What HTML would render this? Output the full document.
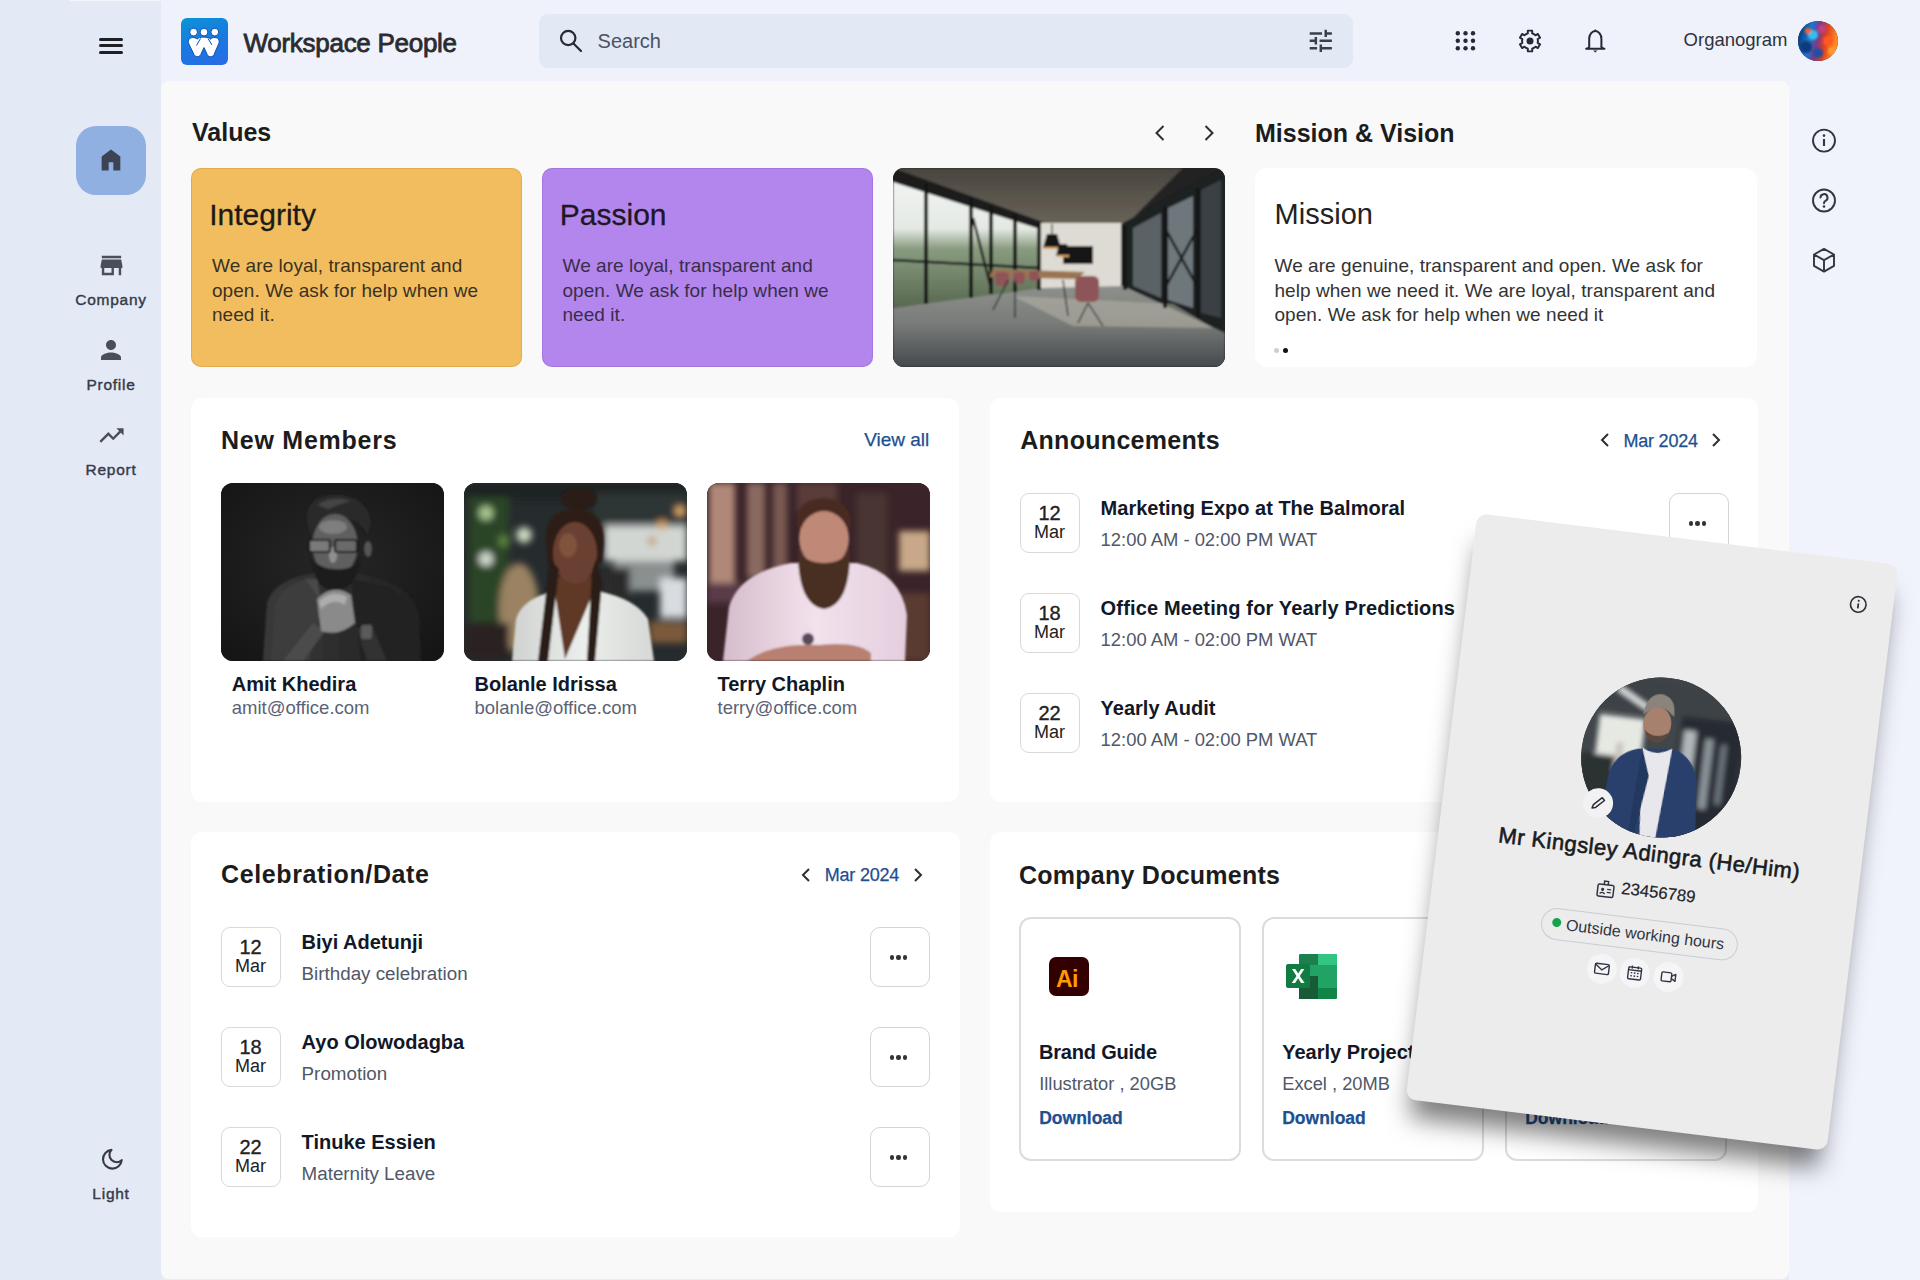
<!DOCTYPE html>
<html><head><meta charset="utf-8">
<style>
*{box-sizing:border-box;margin:0;padding:0}
html,body{width:1920px;height:1280px;overflow:hidden}
body{background:#eff2fb;font-family:"Liberation Sans",sans-serif;position:relative;color:#1a1a1a}
.a{position:absolute}
.t{position:absolute;line-height:1;white-space:nowrap;top:calc(var(--b)*1px - 0.8465em)}
.b{font-weight:700}
svg{position:absolute;overflow:visible}
#side{left:0;top:0;width:161px;height:1280px;background:#e4e9f6}
#top{left:161px;top:0;width:1759px;height:81px;background:#eff2fb}
#main{left:161px;top:81px;width:1628px;height:1198px;background:#f9f9f9;border-radius:8px}
#rcol{left:1789px;top:81px;width:131px;height:1199px;background:#f0f3fc}
.card{position:absolute;background:#fff;border-radius:11px}
.lbl{font-size:15.5px;font-weight:400;color:#363a46;letter-spacing:0.75px;-webkit-text-stroke:0.4px #363a46}
.h2{font-size:25px;font-weight:700;color:#1c1c1c}
.date{position:absolute;width:60px;height:60px;border:1.5px solid #d9d9d9;border-radius:9px;background:#fff}
.date .n{position:absolute;left:0;width:57px;text-align:center;font-size:20px;line-height:1;top:calc(27px - 0.8465em - 1.5px);color:#222;-webkit-text-stroke:0.35px #222}
.date .m{position:absolute;left:0;width:57px;text-align:center;font-size:18px;line-height:1;top:calc(45.5px - 0.8465em - 1.5px);color:#222}
.dots{position:absolute;width:60px;height:60px;border:1.5px solid #d4d4d4;border-radius:10px;background:#fff}
.dots i{position:absolute;top:27.3px;width:4.5px;height:4.5px;border-radius:50%;background:#333}
.blue{color:#1d4f91;-webkit-text-stroke:0.25px #1d4f91}
.gray{color:#4f5868}
.nm{font-size:20px;font-weight:700;color:#111827}
</style></head><body>

<div id="side" class="a"></div>
<div class="a" style="left:70px;top:0;width:91px;height:1px;background:#f4f6fc"></div>
<div id="top" class="a"></div>
<div id="rcol" class="a"></div>
<div class="a" style="left:161px;top:1270px;width:1628px;height:10px;background:#e8ecf8"></div>
<div id="main" class="a"></div>

<!-- SIDEBAR -->
<div class="a" style="left:99px;top:38px;width:24px;height:3px;border-radius:2px;background:#1f2024"></div>
<div class="a" style="left:99px;top:44.3px;width:24px;height:3px;border-radius:2px;background:#1f2024"></div>
<div class="a" style="left:99px;top:50.5px;width:24px;height:3px;border-radius:2px;background:#1f2024"></div>

<div class="a" style="left:76px;top:126px;width:70px;height:69px;border-radius:20px;background:#8fb0e0"></div>
<svg style="left:97px;top:146px" width="28" height="28" viewBox="0 0 24 24"><path d="M4 21V9l8-6 8 6v12h-6v-7h-4v7z" fill="#3d4354"/></svg>

<svg style="left:96.5px;top:251px" width="29" height="29" viewBox="0 0 24 24"><path d="M20 4H4v2h16V4zm1 10v-2l-1-5H4l-1 5v2h1v6h10v-6h4v6h2v-6h1zm-9 4H6v-4h6v4z" fill="#4a4d5a"/></svg>
<div class="t lbl" style="--b:305.4;left:111px;transform:translateX(-50%)">Company</div>

<svg style="left:96px;top:335px" width="30" height="30" viewBox="0 0 24 24"><path d="M12 12c2.21 0 4-1.79 4-4s-1.79-4-4-4-4 1.79-4 4 1.79 4 4 4zm0 2c-2.67 0-8 1.34-8 4v2h16v-2c0-2.66-5.33-4-8-4z" fill="#4a4d5a"/></svg>
<div class="t lbl" style="--b:390;left:111px;transform:translateX(-50%)">Profile</div>

<svg style="left:96.5px;top:420.5px" width="29" height="29" viewBox="0 0 24 24"><path d="M16 6l2.29 2.29-4.88 4.88-4-4L2 16.59 3.41 18l6-6 4 4 6.3-6.29L22 12V6z" fill="#4a4d5a"/></svg>
<div class="t lbl" style="--b:475;left:111px;transform:translateX(-50%)">Report</div>

<svg style="left:97.5px;top:1145.5px" width="26.5" height="26.5" viewBox="0 0 24 24"><path d="M12.3 3.5a8.5 8.5 0 1 0 9.2 9.3 6.5 6.5 0 0 1-9.2-9.3z" fill="none" stroke="#3a3a40" stroke-width="1.9" stroke-linejoin="round"/></svg>
<div class="t lbl" style="--b:1199;left:111px;transform:translateX(-50%)">Light</div>

<!-- TOPBAR -->
<div class="a" style="left:181px;top:18px;width:47px;height:47px;border-radius:6px;background:linear-gradient(160deg,#0b93d6 0%,#1a78e0 55%,#2a6ae8 100%)"></div>
<svg style="left:181px;top:18px" width="47" height="47" viewBox="0 0 47 47">
 <g fill="#fff" stroke="#0a4fb0" stroke-width="1">
  <circle cx="12.6" cy="14.1" r="3.9"/><circle cx="23" cy="14.1" r="3.9"/><circle cx="33.8" cy="14.1" r="3.9"/>
  <path d="M7.5 22c1-3 7-3.2 8.5-0.8 1.5-2.8 12-2.8 13.5 0 1.6-2.4 7.5-2.2 8.5 0.8 0.5 1.6 0 3-0.8 5l-4.2 9.6c-1.3 2.8-5.5 2.8-6.8 0L23 29.6l-3.2 6.9c-1.3 2.8-5.5 2.8-6.8 0L8.3 27c-0.8-2-1.3-3.4-0.8-5z"/>
 </g>
 <path d="M19.5 20.5l-4 7M27 20.5l4 6.5" stroke="#0a4fb0" stroke-width="1" fill="none"/>
</svg>
<div class="t" style="--b:52;left:243.5px;font-size:26px;letter-spacing:-0.28px;color:#2b2b30;-webkit-text-stroke:0.8px #2b2b30">Workspace People</div>

<div class="a" style="left:539px;top:13.5px;width:814px;height:54px;border-radius:9px;background:#e3e8f5"></div>
<svg style="left:558px;top:28px" width="26" height="26" viewBox="0 0 26 26"><circle cx="10.2" cy="10" r="7.2" fill="none" stroke="#262a35" stroke-width="2.2"/><path d="M15.5 15.5l7.5 7.5" stroke="#262a35" stroke-width="2.2" stroke-linecap="round"/></svg>
<div class="t" style="--b:48;left:597.6px;font-size:20px;color:#4b5262">Search</div>
<svg style="left:1305.6px;top:26.3px" width="29.6" height="29.6" viewBox="0 0 24 24"><path d="M3 17v2h6v-2H3zM3 5v2h10V5H3zm10 16v-2h8v-2h-8v-2h-2v6h2zM7 9v2H3v2h4v2h2V9H7zm14 4v-2H11v2h10zm-6-4h2V7h4V5h-4V3h-2v6z" fill="#3a3f4c"/></svg>

<svg style="left:1450px;top:26px" width="30" height="30" viewBox="0 0 30 30" fill="#262a35">
 <circle cx="7.8" cy="7.3" r="2.2"/><circle cx="15.5" cy="7.3" r="2.2"/><circle cx="23" cy="7.3" r="2.2"/>
 <circle cx="7.8" cy="14.8" r="2.2"/><circle cx="15.5" cy="14.8" r="2.2"/><circle cx="23" cy="14.8" r="2.2"/>
 <circle cx="7.8" cy="22.3" r="2.2"/><circle cx="15.5" cy="22.3" r="2.2"/><circle cx="23" cy="22.3" r="2.2"/>
</svg>
<svg style="left:1515.3px;top:25.8px" width="30" height="30" viewBox="0 0 30 30"><path d="M11.29 8.02 L12.82 7.41 L12.80 4.63 L17.20 4.63 L17.18 7.41 L18.71 8.02 L19.19 8.30 L20.49 9.32 L22.88 7.91 L25.08 11.72 L22.67 13.09 L22.90 14.72 L22.90 15.28 L22.67 16.91 L25.08 18.28 L22.88 22.09 L20.49 20.68 L19.19 21.70 L18.71 21.98 L17.18 22.59 L17.20 25.37 L12.80 25.37 L12.82 22.59 L11.29 21.98 L10.81 21.70 L9.51 20.68 L7.12 22.09 L4.92 18.28 L7.33 16.91 L7.10 15.28 L7.10 14.72 L7.33 13.09 L4.92 11.72 L7.12 7.91 L9.51 9.32 L10.81 8.30Z" fill="none" stroke="#262a35" stroke-width="1.95" stroke-linejoin="round"/><circle cx="15" cy="15" r="3.5" fill="#262a35"/></svg>
<svg style="left:1583px;top:28px" width="24" height="26" viewBox="0 0 24 26"><path d="M6.2 19.6V10.8a6.1 7.8 0 0 1 12.2 0V19.6" fill="none" stroke="#262a35" stroke-width="2"/><path d="M3.2 20.7h18.2" stroke="#262a35" stroke-width="2.1" stroke-linecap="round"/><path d="M6.2 18.5q0 1.6-2.6 2.2M18.4 18.5q0 1.6 2.6 2.2" fill="none" stroke="#262a35" stroke-width="1.8"/><path d="M12.3 0.9l1.6 2.3h-3.2z" fill="#262a35"/><path d="M10.1 22.6h4.4l-2.2 1.8z" fill="#262a35"/></svg>

<div class="t" style="--b:47;left:1683.6px;font-size:18.5px;color:#2e3240">Organogram</div>
<div class="a" style="left:1798.4px;top:20.8px;width:40px;height:40px;border-radius:50%;overflow:hidden;background:#1a3a7a">
<svg style="left:0;top:0" width="40" height="40" viewBox="0 0 40 40"><defs><filter id="avb"><feGaussianBlur stdDeviation="1.2"/></filter>
<linearGradient id="avg" x1="0" y1="0" x2="1" y2="0.2"><stop offset="0" stop-color="#0a2a5a"/><stop offset="0.35" stop-color="#1a78d0"/><stop offset="0.55" stop-color="#7a3a8a"/><stop offset="0.75" stop-color="#e04020"/><stop offset="1" stop-color="#ff8a20"/></linearGradient></defs>
<rect width="40" height="40" fill="url(#avg)"/>
<g filter="url(#avb)"><circle cx="15" cy="14" r="5" fill="#30c0f0"/><circle cx="8" cy="26" r="6" fill="#0a3a80"/><circle cx="30" cy="20" r="5" fill="#ff5a20"/><circle cx="24" cy="8" r="4" fill="#c04080"/><circle cx="20" cy="32" r="5" fill="#2050a0"/><circle cx="34" cy="30" r="4" fill="#ff9a30"/><circle cx="10" cy="10" r="3" fill="#ff6020"/></g>
</svg></div>

<!-- RIGHT COL ICONS -->
<svg style="left:1811px;top:128px" width="26" height="26" viewBox="0 0 26 26"><circle cx="13" cy="12.6" r="11" fill="none" stroke="#33363f" stroke-width="1.9"/><path d="M13 11v7" stroke="#33363f" stroke-width="2.1"/><circle cx="13" cy="7.6" r="1.3" fill="#33363f"/></svg>
<svg style="left:1811px;top:188px" width="26" height="26" viewBox="0 0 26 26"><circle cx="13" cy="12.5" r="11" fill="none" stroke="#33363f" stroke-width="1.9"/><path d="M9.5 9.6a3.5 3.5 0 1 1 5 3.2c-1 .5-1.5 1.2-1.5 2.4" fill="none" stroke="#33363f" stroke-width="2" stroke-linecap="round"/><circle cx="13" cy="18.5" r="1.3" fill="#33363f"/></svg>
<svg style="left:1811px;top:247px" width="26" height="26" viewBox="0 0 26 26"><path d="M13 1.8l10 5.7v11.4l-10 5.7-10-5.7V7.5z M3 7.5l10 5.7 10-5.7 M13 13.2v11.4" fill="none" stroke="#33363f" stroke-width="1.9" stroke-linejoin="round"/></svg>


<!-- VALUES -->
<div class="t h2" style="--b:141.6;left:192px">Values</div>
<svg style="left:1150px;top:123px" width="20" height="20" viewBox="0 0 20 20"><path d="M13.5 3l-7 7 7 7" fill="none" stroke="#2f2f33" stroke-width="2"/></svg>
<svg style="left:1199px;top:123px" width="20" height="20" viewBox="0 0 20 20"><path d="M6.5 3l7 7-7 7" fill="none" stroke="#2f2f33" stroke-width="2"/></svg>
<div class="t h2" style="--b:142;left:1255px">Mission &amp; Vision</div>

<div class="a" style="left:191px;top:168px;width:331px;height:199px;border-radius:10px;background:#f2bd5f;box-shadow:inset 0 0 0 1px rgba(200,140,40,.35)"></div>
<div class="t" style="--b:225.5;left:209.2px;font-size:30px;color:#1d1b16;-webkit-text-stroke:0.3px #1d1b16">Integrity</div>
<div class="t" style="--b:272;left:212px;font-size:19px;color:#3b3222;letter-spacing:0.05px">We are loyal, transparent and</div>
<div class="t" style="--b:296.6;left:212px;font-size:19px;color:#3b3222;letter-spacing:0.05px">open. We ask for help when we</div>
<div class="t" style="--b:321.2;left:212px;font-size:19px;color:#3b3222;letter-spacing:0.05px">need it.</div>

<div class="a" style="left:542px;top:168px;width:331px;height:199px;border-radius:10px;background:#b286ed;box-shadow:inset 0 0 0 1px rgba(140,90,210,.35)"></div>
<div class="t" style="--b:225.5;left:559.8px;font-size:30px;color:#1d1824;-webkit-text-stroke:0.3px #1d1824">Passion</div>
<div class="t" style="--b:272;left:562.5px;font-size:19px;color:#3a2d4a;letter-spacing:0.05px">We are loyal, transparent and</div>
<div class="t" style="--b:296.6;left:562.5px;font-size:19px;color:#3a2d4a;letter-spacing:0.05px">open. We ask for help when we</div>
<div class="t" style="--b:321.2;left:562.5px;font-size:19px;color:#3a2d4a;letter-spacing:0.05px">need it.</div>

<!-- office image -->
<div class="a" style="left:893px;top:168px;width:332px;height:199px;border-radius:11px;overflow:hidden;background:#6b6e70">
<svg style="left:0;top:0" width="332" height="199" viewBox="0 0 332 199">
 <defs>
  <linearGradient id="floor" x1="0" y1="0" x2="0" y2="1"><stop offset="0" stop-color="#8e908c"/><stop offset="0.45" stop-color="#7a7c7a"/><stop offset="1" stop-color="#454a4e"/></linearGradient>
  <linearGradient id="ceil" x1="0" y1="0" x2="0" y2="1"><stop offset="0" stop-color="#4a453f"/><stop offset="1" stop-color="#6a645a"/></linearGradient>
  <linearGradient id="win" x1="0" y1="0" x2="0" y2="1"><stop offset="0" stop-color="#f2f5f3"/><stop offset="0.4" stop-color="#e4e9e4"/><stop offset="0.55" stop-color="#8a9c80"/><stop offset="1" stop-color="#56684e"/></linearGradient>
  <filter id="obl" x="-10%" y="-10%" width="120%" height="120%"><feGaussianBlur stdDeviation="0.8"/></filter>
 </defs>
 <rect width="332" height="199" fill="#222"/>
 <g filter="url(#obl)">
 <polygon points="0,8 150,55 150,122 0,140" fill="url(#win)"/>
 <polygon points="0,0 290,0 232,58 150,56 0,6" fill="url(#ceil)"/>
 <polygon points="0,0 150,54 150,62 0,14" fill="#1b1b1b"/>
 <rect x="148" y="55" width="82" height="65" fill="#dedad4"/>
 <rect x="170" y="78" width="30" height="18" fill="#141414"/>
 <polygon points="228,56 332,0 332,165 228,120" fill="#1e2024"/>
 <polygon points="240,60 268,45 268,130 240,118" fill="#5a6266"/>
 <polygon points="275,40 300,28 300,140 275,132" fill="#6e777b"/>
 <polygon points="308,22 328,12 328,150 308,145" fill="#3a4044"/>
 <polygon points="0,140 150,120 230,118 332,165 332,199 0,199" fill="url(#floor)"/>
 <polygon points="120,128 280,136 320,160 180,158" fill="#b8b4a8" opacity="0.55"/>
 <g stroke="#151515" stroke-width="4">
  <line x1="33" y1="16" x2="33" y2="136"/><line x1="78" y1="30" x2="78" y2="130"/>
  <line x1="98" y1="38" x2="98" y2="126"/><line x1="122" y1="46" x2="122" y2="124"/><line x1="146" y1="55" x2="146" y2="122"/>
  <line x1="232" y1="58" x2="232" y2="122"/><line x1="272" y1="38" x2="272" y2="140"/><line x1="305" y1="20" x2="305" y2="150"/>
 </g>
 <g stroke="#151515" stroke-width="2.5"><line x1="0" y1="92" x2="146" y2="100"/><line x1="80" y1="50" x2="98" y2="120"/><line x1="272" y1="60" x2="305" y2="120"/><line x1="305" y1="60" x2="272" y2="120"/></g>
 <line x1="159" y1="56" x2="159" y2="66" stroke="#222" stroke-width="1"/><path d="M150 80 L154 66 L164 66 L168 80 Z" fill="#141414"/><rect x="151" y="79" width="16" height="2" fill="#d8a060"/><path d="M163 88 L166 76 L174 76 L177 88 Z" fill="#141414"/><rect x="164" y="87" width="12" height="2" fill="#d8a060"/>
 <polygon points="100,101 192,104 184,111 96,109" fill="#9a7452"/>
 <g fill="#8e5458"><rect x="102" y="104" width="14" height="14" rx="4"/><rect x="120" y="104" width="12" height="12" rx="4"/><rect x="136" y="103" width="10" height="10" rx="3"/><rect x="182" y="108" width="24" height="26" rx="6"/></g>
 <g stroke="#222" stroke-width="1.3"><line x1="115" y1="112" x2="100" y2="142"/><line x1="122" y1="112" x2="122" y2="150"/><line x1="170" y1="112" x2="175" y2="148"/><line x1="195" y1="135" x2="185" y2="155"/><line x1="195" y1="135" x2="210" y2="158"/></g>
 </g>
</svg>
</div>

<div class="a" style="left:1255px;top:168px;width:502px;height:199px;border-radius:12px;background:#fff"></div>
<div class="t" style="--b:225;left:1274.6px;font-size:29px;color:#222">Mission</div>
<div class="t" style="--b:271.8;left:1274.5px;font-size:19px;color:#333;letter-spacing:0.05px">We are genuine, transparent and open. We ask for</div>
<div class="t" style="--b:296.6;left:1274.5px;font-size:19px;color:#333;letter-spacing:0.05px">help when we need it. We are loyal, transparent and</div>
<div class="t" style="--b:321.5;left:1274.5px;font-size:19px;color:#333;letter-spacing:0.05px">open. We ask for help when we need it</div>
<div class="a" style="left:1274.2px;top:348px;width:5px;height:5px;border-radius:50%;background:#cfcfcf"></div>
<div class="a" style="left:1282.8px;top:347.7px;width:5.6px;height:5.6px;border-radius:50%;background:#111"></div>


<!-- NEW MEMBERS -->
<div class="card" style="left:191px;top:398px;width:768px;height:404px"></div>
<div class="t h2" style="--b:449;left:221px;letter-spacing:0.75px">New Members</div>
<div class="t blue" style="--b:446.5;left:864.2px;font-size:19px">View all</div>

<div class="a" style="left:221px;top:483px;width:223px;height:178px;border-radius:12px;overflow:hidden;background:#1b1b1b">
<svg style="left:0;top:0" width="223" height="178" viewBox="0 0 223 178">
 <defs><filter id="bl1" x="-20%" y="-20%" width="140%" height="140%"><feGaussianBlur stdDeviation="1.3"/></filter>
 <radialGradient id="vg1" cx="0.5" cy="0.45" r="0.7"><stop offset="0" stop-color="#262626"/><stop offset="1" stop-color="#151515"/></radialGradient>
 <linearGradient id="jk1" x1="0" y1="0" x2="1" y2="0"><stop offset="0" stop-color="#3a3a3a"/><stop offset="0.5" stop-color="#2c2c2c"/><stop offset="1" stop-color="#222"/></linearGradient></defs>
 <rect width="223" height="178" fill="url(#vg1)"/>
 <g filter="url(#bl1)">
  <path d="M42 178 L46 120 Q52 100 82 92 L104 88 L126 88 L160 96 Q192 106 198 132 L200 178 Z" fill="url(#jk1)"/>
  <path d="M50 178 L54 122 Q60 104 84 96 L102 120 L88 178 Z" fill="#3c3c3c"/>
  <path d="M84 96 L100 118 L96 96 Z" fill="#4a4a4a"/>
  <path d="M130 96 L168 104 Q186 114 190 142 L192 178 L140 178 Z" fill="#242424"/>
  <path d="M86 40 Q84 12 114 12 Q146 12 150 40 L146 52 Q140 34 114 34 Q94 34 90 52 Z" fill="#2c2c2c"/>
  <path d="M96 22 Q110 12 130 18 Q120 20 108 26 Z" fill="#444"/>
  <ellipse cx="114" cy="62" rx="23" ry="31" fill="#5e5e5e"/>
  <ellipse cx="112" cy="44" rx="14" ry="7" fill="#7e7e7e"/>
  <ellipse cx="112" cy="72" rx="4" ry="8" fill="#909090"/>
  <ellipse cx="147" cy="66" rx="4" ry="8" fill="#555"/>
  <path d="M90 74 Q94 108 114 108 Q136 106 140 74 Q132 88 114 86 Q98 86 90 74 Z" fill="#1a1a1a"/>
  <rect x="88" y="57" width="21" height="12" rx="2" fill="#7a7a7a" stroke="#1a1a1a" stroke-width="2.2"/>
  <rect x="114" y="57" width="22" height="12" rx="2" fill="#6a6a6a" stroke="#1a1a1a" stroke-width="2.2"/>
  <path d="M62 178 L92 140 L104 148 L82 178 Z" fill="#4c4c4c"/>
  <path d="M136 146 L150 140 L166 178 L146 178 Z" fill="#303030"/>
  <rect x="140" y="142" width="11" height="14" rx="2" fill="#5a5a5a"/>
  <path d="M96 116 Q112 100 130 112 L134 140 Q118 154 100 148 Z" fill="#8a8a8a"/>
  <path d="M98 118 Q112 106 126 114 L124 122 Q112 114 100 126 Z" fill="#adadad"/>
 </g>
</svg></div>
<div class="t nm" style="--b:690.6;left:231.8px">Amit Khedira</div>
<div class="t gray" style="--b:714.5;left:231.8px;font-size:18.5px;color:#5a6374">amit@office.com</div>

<div class="a" style="left:464px;top:483px;width:223px;height:178px;border-radius:12px;overflow:hidden;background:#2c3034">
<svg style="left:0;top:0" width="223" height="178" viewBox="0 0 223 178">
 <defs><filter id="bl2" x="-20%" y="-20%" width="140%" height="140%"><feGaussianBlur stdDeviation="3.5"/></filter>
 <filter id="bl2b" x="-20%" y="-20%" width="140%" height="140%"><feGaussianBlur stdDeviation="0.9"/></filter>
 <linearGradient id="sh2" x1="0" y1="0" x2="1" y2="0"><stop offset="0" stop-color="#cfd2d0"/><stop offset="0.5" stop-color="#eceeec"/><stop offset="1" stop-color="#d6d8d6"/></linearGradient></defs>
 <rect width="223" height="178" fill="#262b2d"/>
 <g filter="url(#bl2)">
  <rect x="0" y="0" width="223" height="16" fill="#1c2022"/>
  <rect x="130" y="10" width="93" height="30" fill="#2e3434"/>
  <rect x="140" y="42" width="83" height="36" fill="#d2d6d2"/>
  <rect x="150" y="78" width="60" height="30" fill="#8a9090"/>
  <circle cx="216" cy="28" r="5" fill="#e8b070"/><circle cx="198" cy="42" r="5" fill="#d8a060"/><circle cx="188" cy="58" r="4" fill="#c89060"/>
  <rect x="5" y="14" width="40" height="125" fill="#2c4426"/>
  <circle cx="22" cy="30" r="7" fill="#a8c890"/><circle cx="60" cy="52" r="8" fill="#c8d8c0"/><circle cx="22" cy="76" r="7" fill="#d0dcd0"/><circle cx="40" cy="58" r="6" fill="#5a8040"/>
  <ellipse cx="55" cy="125" rx="20" ry="45" fill="#9a8262"/>
  <rect x="140" y="85" width="26" height="40" fill="#2a2a2a"/>
  <rect x="196" y="95" width="27" height="40" fill="#d8dce0"/>
  <rect x="185" y="138" width="38" height="22" fill="#7a5a3a"/>
  <rect x="0" y="140" width="45" height="38" fill="#2a2420"/>
 </g>
 <g filter="url(#bl2b)">
  <path d="M48 178 L52 136 Q58 116 90 108 L134 108 Q172 116 184 136 L190 178 Z" fill="url(#sh2)"/>
  <path d="M92 94 L128 94 L129 110 L101 176 L91 110 Z" fill="#5e3828"/>
  <ellipse cx="115" cy="16" rx="18" ry="11" fill="#2a1c16"/>
  <path d="M82 60 Q80 26 112 26 Q140 26 140 60 L138 80 L84 80 Z" fill="#2e1e18"/>
  <ellipse cx="111" cy="70" rx="22" ry="31" fill="#6a4030"/>
  <ellipse cx="104" cy="62" rx="9" ry="12" fill="#80523c"/>
  <path d="M86 76 L74 178 L84 178 L95 86 Z" fill="#2a1a14"/>
  <path d="M132 76 L138 100 L131 178 L123 178 L128 88 Z" fill="#2a1a14"/>
 </g>
</svg></div>
<div class="t nm" style="--b:690.6;left:474.5px">Bolanle Idrissa</div>
<div class="t gray" style="--b:714.5;left:474.5px;font-size:18.5px;color:#5a6374">bolanle@office.com</div>

<div class="a" style="left:707px;top:483px;width:223px;height:178px;border-radius:12px;overflow:hidden;background:#3a2328">
<svg style="left:0;top:0" width="223" height="178" viewBox="0 0 223 178">
 <defs><filter id="bl3" x="-20%" y="-20%" width="140%" height="140%"><feGaussianBlur stdDeviation="3"/></filter>
 <filter id="bl3b" x="-20%" y="-20%" width="140%" height="140%"><feGaussianBlur stdDeviation="1.2"/></filter></defs>
 <rect width="223" height="178" fill="#3a2429"/>
 <g filter="url(#bl3)">
  <rect x="2" y="0" width="26" height="100" fill="#b08878"/>
  <rect x="40" y="0" width="18" height="95" fill="#8a6a60"/>
  <rect x="66" y="0" width="14" height="90" fill="#7a5a52"/>
  <rect x="90" y="0" width="40" height="30" fill="#5a3e3a"/>
  <rect x="150" y="10" width="30" height="100" fill="#4a3432"/>
  <rect x="192" y="48" width="31" height="40" fill="#c8a888"/>
  <rect x="0" y="100" width="60" height="20" fill="#5a3a4a"/>
  <rect x="190" y="110" width="33" height="68" fill="#5a3a30"/>
 </g>
 <g filter="url(#bl3b)">
  <defs><linearGradient id="sh3" x1="0" y1="0" x2="1" y2="0"><stop offset="0" stop-color="#d6bccc"/><stop offset="0.5" stop-color="#f2e2ec"/><stop offset="1" stop-color="#e4cede"/></linearGradient></defs>
  <path d="M16 178 L22 124 Q32 90 84 80 L150 80 Q194 90 200 132 L198 178 Z" fill="url(#sh3)"/>
  <path d="M40 178 Q64 160 112 162 Q150 158 164 170 L164 178 Z" fill="#b88070"/>
  <path d="M90 42 Q88 16 117 15 Q143 16 144 42 L140 50 L93 50 Z" fill="#4a2c22"/>
  <ellipse cx="117" cy="56" rx="25" ry="28" fill="#c08876"/>
  <path d="M91 64 Q90 122 117 126 Q144 122 143 64 Q138 80 117 80 Q96 80 91 64 Z" fill="#4a2e24"/>
  <circle cx="101" cy="156" r="6" fill="#5a4a5a"/>
 </g>
</svg></div>
<div class="t nm" style="--b:690.6;left:717.5px">Terry Chaplin</div>
<div class="t gray" style="--b:714.5;left:717.5px;font-size:18.5px;color:#5a6374">terry@office.com</div>

<!-- ANNOUNCEMENTS -->
<div class="card" style="left:990px;top:398px;width:768px;height:404px"></div>
<div class="t h2" style="--b:449;left:1020.2px;letter-spacing:0.3px">Announcements</div>
<svg style="left:1597px;top:432px" width="16" height="16" viewBox="0 0 16 16"><path d="M11 2l-6 6 6 6" fill="none" stroke="#2f2f33" stroke-width="2"/></svg>
<div class="t blue" style="--b:447;left:1623.4px;font-size:18px;letter-spacing:-0.2px">Mar 2024</div>
<svg style="left:1708px;top:432px" width="16" height="16" viewBox="0 0 16 16"><path d="M5 2l6 6-6 6" fill="none" stroke="#2f2f33" stroke-width="2"/></svg>

<div class="date" style="left:1020px;top:493px"><div class="n">12</div><div class="m">Mar</div></div>
<div class="t nm" style="--b:515;left:1100.6px">Marketing Expo at The Balmoral</div>
<div class="t gray" style="--b:546.3;left:1100.6px;font-size:18.4px">12:00 AM - 02:00 PM WAT</div>
<div class="dots" style="left:1669px;top:493px"><i style="left:18.5px"></i><i style="left:25px"></i><i style="left:31.5px"></i></div>

<div class="date" style="left:1020px;top:593px"><div class="n">18</div><div class="m">Mar</div></div>
<div class="t nm" style="--b:615;left:1100.6px;letter-spacing:0.16px">Office Meeting for Yearly Predictions</div>
<div class="t gray" style="--b:646.3;left:1100.6px;font-size:18.4px">12:00 AM - 02:00 PM WAT</div>
<div class="dots" style="left:1669px;top:593px"><i style="left:18.5px"></i><i style="left:25px"></i><i style="left:31.5px"></i></div>

<div class="date" style="left:1020px;top:693px"><div class="n">22</div><div class="m">Mar</div></div>
<div class="t nm" style="--b:715;left:1100.6px">Yearly Audit</div>
<div class="t gray" style="--b:746.3;left:1100.6px;font-size:18.4px">12:00 AM - 02:00 PM WAT</div>
<div class="dots" style="left:1669px;top:693px"><i style="left:18.5px"></i><i style="left:25px"></i><i style="left:31.5px"></i></div>

<!-- CELEBRATION -->
<div class="card" style="left:191px;top:832px;width:769px;height:405px"></div>
<div class="t h2" style="--b:883.3;left:221px;letter-spacing:0.62px">Celebration/Date</div>
<svg style="left:798px;top:867px" width="16" height="16" viewBox="0 0 16 16"><path d="M11 2l-6 6 6 6" fill="none" stroke="#2f2f33" stroke-width="2"/></svg>
<div class="t blue" style="--b:881;left:824.7px;font-size:18px;letter-spacing:-0.2px">Mar 2024</div>
<svg style="left:909.5px;top:867px" width="16" height="16" viewBox="0 0 16 16"><path d="M5 2l6 6-6 6" fill="none" stroke="#2f2f33" stroke-width="2"/></svg>

<div class="date" style="left:221px;top:927px"><div class="n">12</div><div class="m">Mar</div></div>
<div class="t nm" style="--b:949.4;left:301.6px">Biyi Adetunji</div>
<div class="t gray" style="--b:981;left:301.6px;font-size:18.8px">Birthday celebration</div>
<div class="dots" style="left:870px;top:927px"><i style="left:18.5px"></i><i style="left:25px"></i><i style="left:31.5px"></i></div>

<div class="date" style="left:221px;top:1027px"><div class="n">18</div><div class="m">Mar</div></div>
<div class="t nm" style="--b:1049.4;left:301.6px">Ayo Olowodagba</div>
<div class="t gray" style="--b:1081;left:301.6px;font-size:18.8px">Promotion</div>
<div class="dots" style="left:870px;top:1027px"><i style="left:18.5px"></i><i style="left:25px"></i><i style="left:31.5px"></i></div>

<div class="date" style="left:221px;top:1127px"><div class="n">22</div><div class="m">Mar</div></div>
<div class="t nm" style="--b:1149.4;left:301.6px">Tinuke Essien</div>
<div class="t gray" style="--b:1181;left:301.6px;font-size:18.8px">Maternity Leave</div>
<div class="dots" style="left:870px;top:1127px"><i style="left:18.5px"></i><i style="left:25px"></i><i style="left:31.5px"></i></div>

<!-- DOCUMENTS -->
<div class="card" style="left:990px;top:832px;width:768px;height:380px"></div>
<div class="t h2" style="--b:883.75;left:1019px;letter-spacing:0.25px">Company Documents</div>

<div class="a" style="left:1019px;top:917px;width:222px;height:244px;border:2px solid #dcdcdc;border-radius:12px;background:#fff"></div>
<div class="a" style="left:1049px;top:957px;width:40px;height:39px;border-radius:7px;background:#330000"></div>
<div class="t b" style="--b:987;left:1056px;font-size:23px;color:#ff9a00;letter-spacing:-0.5px">Ai</div>
<div class="t nm" style="--b:1059.3;left:1039px;letter-spacing:-0.2px">Brand Guide</div>
<div class="t gray" style="--b:1090.5;left:1039.2px;font-size:18.3px">Illustrator , 20GB</div>
<div class="t b blue" style="--b:1125.2;left:1039.2px;font-size:17.5px">Download</div>

<div class="a" style="left:1262px;top:917px;width:222px;height:244px;border:2px solid #dcdcdc;border-radius:12px;background:#fff"></div>
<svg style="left:1286px;top:954px" width="51" height="46" viewBox="0 0 51 46">
 <rect x="13" y="0" width="38" height="45" rx="2" fill="#21a366"/>
 <rect x="13" y="0" width="19" height="11" fill="#185c37" opacity="0.5"/>
 <rect x="32" y="0" width="19" height="11" fill="#33c481"/>
 <rect x="13" y="22" width="19" height="23" fill="#185c37"/>
 <rect x="32" y="34" width="19" height="11" rx="1" fill="#107c41" opacity="0.8"/>
 <rect x="0" y="10" width="24" height="24" rx="2" fill="#107c41"/>
 <path d="M6 15l4.5 7-4.8 7h3.4l3-4.8 3 4.8h3.5l-4.8-7 4.6-7h-3.3l-2.9 4.6-2.9-4.6z" fill="#fff"/>
</svg>
<div class="t nm" style="--b:1059.3;left:1282.2px">Yearly Projections</div>
<div class="t gray" style="--b:1090.5;left:1282.2px;font-size:18.3px">Excel , 20MB</div>
<div class="t b blue" style="--b:1125.2;left:1282.2px;font-size:17.5px">Download</div>

<div class="a" style="left:1505px;top:917px;width:222px;height:244px;border:2px solid #dcdcdc;border-radius:12px;background:#fff"></div>
<div class="t b blue" style="--b:1125.2;left:1525.2px;font-size:17.5px">Download</div>


<!-- PROFILE CARD -->
<div class="a" id="pcard" style="left:1440.3px;top:537px;width:424px;height:590px;border-radius:10px;background:#ececec;transform:rotate(7deg);transform-origin:50% 50%;box-shadow:0 24px 24px -6px rgba(0,0,0,.5)">
 <svg style="left:380px;top:35px" width="18" height="18" viewBox="0 0 18 18"><circle cx="9" cy="9" r="7.8" fill="none" stroke="#2a2e38" stroke-width="1.6"/><path d="M9 8v5" stroke="#2a2e38" stroke-width="1.7"/><circle cx="9" cy="5.3" r="1" fill="#2a2e38"/></svg>
 <div class="a" style="left:132px;top:139.6px;width:160px;height:160px;border-radius:50%;overflow:hidden;background:#555">
  <svg style="left:0;top:0" width="160" height="160" viewBox="0 0 160 160">
   <defs><filter id="bl4" x="-20%" y="-20%" width="140%" height="140%"><feGaussianBlur stdDeviation="2.5"/></filter>
   <filter id="bl4b" x="-20%" y="-20%" width="140%" height="140%"><feGaussianBlur stdDeviation="0.7"/></filter></defs>
   <rect width="160" height="160" fill="#40464a"/>
   <g filter="url(#bl4)">
    <rect x="0" y="0" width="160" height="38" fill="#3c4246"/>
    <rect x="14" y="44" width="46" height="40" fill="#e6e8e2"/>
    <rect x="0" y="84" width="60" height="76" fill="#2c3032"/>
    <rect x="28" y="22" width="36" height="5" fill="#e8eaea" transform="rotate(28 46 24)"/>
    <rect x="96" y="36" width="64" height="124" fill="#262c32"/>
    <rect x="100" y="50" width="12" height="80" fill="#b0b8bc"/>
    <rect x="122" y="56" width="8" height="70" fill="#8a949a"/>
    <rect x="138" y="60" width="6" height="60" fill="#6a747a"/>
    <rect x="34" y="70" width="7" height="30" fill="#c8c4c0"/>
   </g>
   <g filter="url(#bl4b)">
    <path d="M26 160 L30 100 Q36 80 56 74 L92 70 Q112 76 118 98 L124 160 Z" fill="#2a416c"/>
    <path d="M60 72 L68 160 L84 160 L90 70 Q80 76 74 76 Q66 76 60 72 Z" fill="#e8e8ec"/>
    <path d="M60 72 L70 100 L62 160 L56 160 Z" fill="#22385e"/>
    <ellipse cx="72" cy="47" rx="14" ry="17" fill="#a8806e"/>
    <path d="M57 40 Q58 18 73 17 Q88 18 88 38 L85 36 Q76 26 62 34 Z" fill="#8a847c"/>
    <path d="M60 54 Q64 66 72 66 Q82 65 85 54 Q79 59 72 59 Q65 59 60 54 Z" fill="#5a4a40"/>
   </g>
  </svg>
 </div>
 <div class="a" style="left:140px;top:258.2px;width:30px;height:30px;border-radius:50%;background:#f2f2f4"></div>
 <svg style="left:145px;top:263.2px" width="20" height="20" viewBox="0 0 20 20"><path d="M4.5 15.5l1-3.5 8-8 2.5 2.5-8 8z" fill="none" stroke="#2a2e38" stroke-width="1.5" stroke-linejoin="round"/></svg>
 <div class="t" style="--b:325;left:0;width:424px;text-align:center;font-size:22px;letter-spacing:0.5px;color:#1a1b1f;-webkit-text-stroke:0.6px #1a1b1f">Mr Kingsley Adingra (He/Him)</div>
 <svg style="left:163px;top:347px" width="20" height="20" viewBox="0 0 20 20"><rect x="2" y="6" width="16" height="12" rx="1.5" fill="none" stroke="#2f3440" stroke-width="1.5"/><path d="M8 6V2.5h4V6" fill="none" stroke="#2f3440" stroke-width="1.5"/><circle cx="7" cy="11" r="1.6" fill="#2f3440"/><path d="M4.5 15.5q2.5-3 5 0M11.5 10.5h4M11.5 13.5h4" fill="none" stroke="#2f3440" stroke-width="1.3"/></svg>
 <div class="t" style="--b:361.3;left:188.5px;font-size:16.8px;letter-spacing:0px;color:#1f2228;-webkit-text-stroke:0.2px #1f2228">23456789</div>
 <div class="a" style="left:113px;top:382px;width:198px;height:32px;border-radius:16px;border:1.3px solid #c7ccd6"></div>
 <div class="a" style="left:124px;top:392px;width:9px;height:9px;border-radius:50%;background:#16a34a"></div>
 <div class="t" style="--b:404;left:138px;font-size:16px;color:#2f3440;letter-spacing:0px">Outside working hours</div>
 <div class="a" style="left:163.5px;top:422px;width:30px;height:30px;border-radius:50%;background:#f5f5f7"></div>
 <div class="a" style="left:197px;top:422px;width:30px;height:30px;border-radius:50%;background:#f5f5f7"></div>
 <div class="a" style="left:230.5px;top:422px;width:30px;height:30px;border-radius:50%;background:#f5f5f7"></div>
 <svg style="left:169.5px;top:428px" width="18" height="18" viewBox="0 0 18 18"><rect x="2" y="4" width="14" height="10" rx="1.2" fill="none" stroke="#2f3440" stroke-width="1.4"/><path d="M2.5 5l6.5 5 6.5-5" fill="none" stroke="#2f3440" stroke-width="1.4"/></svg>
 <svg style="left:203px;top:428px" width="18" height="18" viewBox="0 0 18 18"><rect x="2.5" y="3.5" width="13" height="12" rx="1.2" fill="none" stroke="#2f3440" stroke-width="1.4"/><path d="M2.5 6.5h13M6 2v3M12 2v3" stroke="#2f3440" stroke-width="1.4"/><g fill="#2f3440"><rect x="5" y="8.5" width="1.6" height="1.4"/><rect x="8.2" y="8.5" width="1.6" height="1.4"/><rect x="11.4" y="8.5" width="1.6" height="1.4"/><rect x="5" y="11.5" width="1.6" height="1.4"/><rect x="8.2" y="11.5" width="1.6" height="1.4"/><rect x="11.4" y="11.5" width="1.6" height="1.4"/></g></svg>
 <svg style="left:236.5px;top:428px" width="18" height="18" viewBox="0 0 18 18"><rect x="2" y="4.5" width="10" height="9" rx="1.2" fill="none" stroke="#2f3440" stroke-width="1.4"/><path d="M12 8l4-2.5v7L12 10" fill="none" stroke="#2f3440" stroke-width="1.4" stroke-linejoin="round"/></svg>
</div>

</body></html>
